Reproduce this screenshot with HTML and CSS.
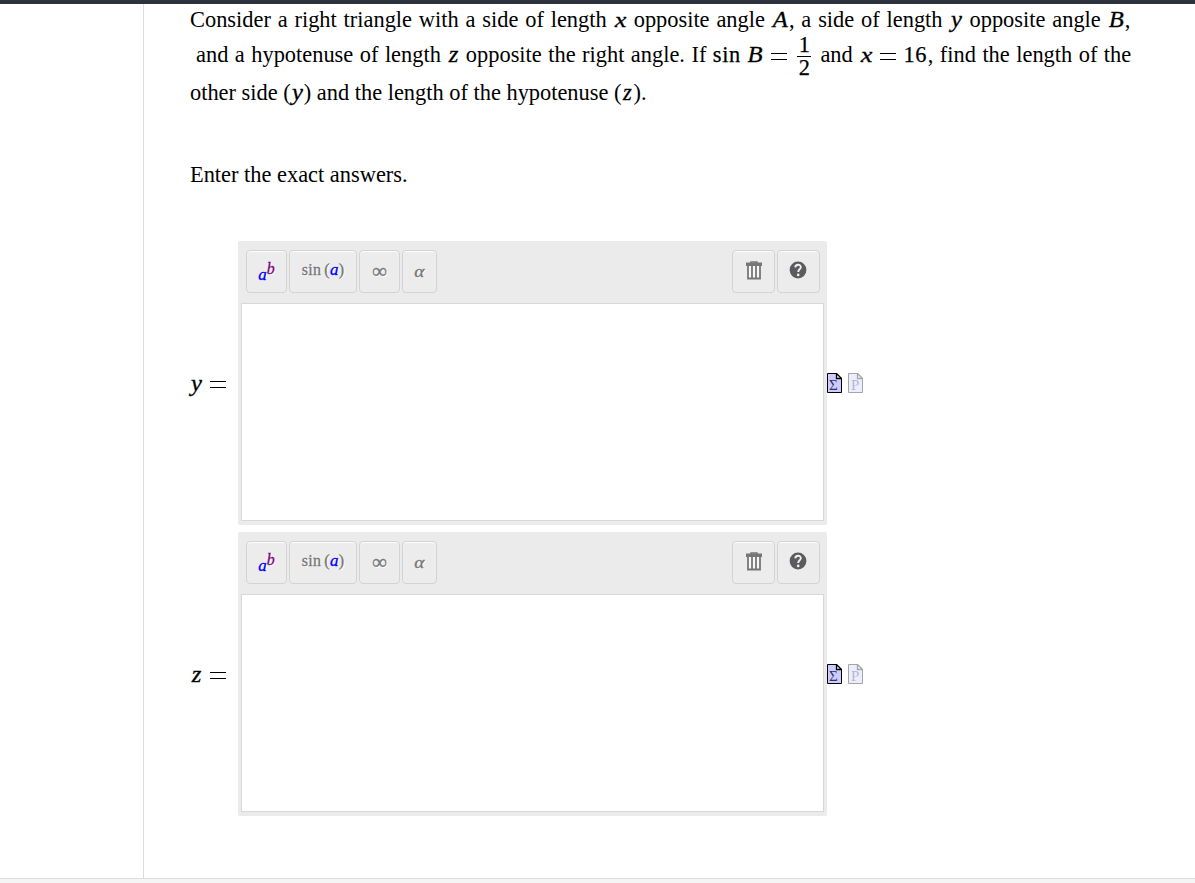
FILE: index.html
```
<!doctype html>
<html>
<head>
<meta charset="utf-8">
<title>Right triangle</title>
<link rel="stylesheet" href="styles.css">
</head>
<body>
<svg class="defs">
	<symbol id="trash" viewBox="0 0 16 19">
		<path d="M5 2V1h6v1" fill="none" stroke="#777" stroke-width="1.4"/>
		<path d="M0 1.5h16v3.5H0z" fill="#777"/>
		<path d="M2 5v12.5h12V5M6 5v12.5M10 5v12.5" fill="#f8f8f8" stroke="#777" stroke-width="1.8"/>
	</symbol>
	<symbol id="help" viewBox="0 0 18 18">
		<circle cx="9" cy="9" r="8.4" fill="#5c5c5f"/>
		<path d="M6.3 6.4C6.4 2.8 12 3 11.8 6.2C11.7 8.3 9.2 8.2 9.2 11" fill="none" stroke="#f2f2f2" stroke-width="1.9"/>
		<circle cx="9.2" cy="13.9" r="1.3" fill="#f2f2f2"/>
	</symbol>
	<symbol id="page" viewBox="0 0 15 20">
		<path d="M.5.5h9l5 5v14H.5z" fill="#ccccff" stroke="#000"/>
		<path d="M9.5.5v5h5z" fill="#eef" stroke="#000" stroke-width="1.3"/>
	</symbol>
</svg>
<div class="top"></div>
<div class="main">
	<div class="side"></div>
	<div class="content">
		<div class="line l1"><span>Consider a right triangle with a side of length</span><i class="x">x</i><span>opposite angle</span><i class="cap">A</i><span>, a side of length</span><i class="y">y</i><span>opposite angle</span><i class="cap">B</i><span>,</span></div>
		<div class="line l2"><span>and a hypotenuse of length</span><i class="z">z</i><span>opposite the right angle. If</span><b class="sin">sin</b><i class="capb">B</i><span class="eq"></span><span class="frac"><b>1</b><b>2</b></span><span>and</span><i class="x">x</i><span class="eq eqx"></span><b class="num">16</b><span class="find">, find the length of the</span></div>
		<div class="line l3"><span>other side (</span><i class="yp">y</i><span>) and the length of the hypotenuse (</span><i class="zp">z</i><span>).</span></div>
		<div class="line l4">Enter the exact answers.</div>

		<div class="row">
			<div class="label"><i>y</i><span class="eq"></span></div>
			<div class="editor">
				<div class="bar">
					<div class="btn b1"><i class="blue">a</i><i class="pow">b</i></div>
					<div class="btn b2">sin<span class="par">(</span><i class="blue">a</i><span>)</span></div>
					<div class="btn b3"><span class="inf">∞</span></div>
					<div class="btn b4"><i>α</i></div>
					<div class="btn b5"><svg width="16" height="19"><use href="#trash"/></svg></div>
					<div class="btn b6"><svg width="18" height="18"><use href="#help"/></svg></div>
				</div>
				<div class="area"></div>
			</div>
			<div class="icons">
				<svg width="15" height="20"><use href="#page"/><text x="2" y="17">Σ</text></svg>
				<svg class="off" width="15" height="20"><use href="#page"/><text x="3" y="17">P</text></svg>
			</div>
		</div>

		<div class="row">
			<div class="label"><i>z</i><span class="eq"></span></div>
			<div class="editor">
				<div class="bar">
					<div class="btn b1"><i class="blue">a</i><i class="pow">b</i></div>
					<div class="btn b2">sin<span class="par">(</span><i class="blue">a</i><span>)</span></div>
					<div class="btn b3"><span class="inf">∞</span></div>
					<div class="btn b4"><i>α</i></div>
					<div class="btn b5"><svg width="16" height="19"><use href="#trash"/></svg></div>
					<div class="btn b6"><svg width="18" height="18"><use href="#help"/></svg></div>
				</div>
				<div class="area"></div>
			</div>
			<div class="icons">
				<svg width="15" height="20"><use href="#page"/><text x="2" y="17">Σ</text></svg>
				<svg class="off" width="15" height="20"><use href="#page"/><text x="3" y="17">P</text></svg>
			</div>
		</div>
	</div>
</div>
<div class="foot"></div>
</body>
</html>
```
FILE: styles.css
```
* {padding:0;margin:0;box-sizing:border-box;}
body{height:883px;
	overflow:hidden;
	background:#fff;
	color:#000;
	font-family:"Liberation Serif",serif;
	font-size:22.4px;
}
.defs{display:none;}
.top{height:4px;
	background:#2e323e;
}
.main{display:flex;
	height:874px;
}
.side{width:144px;
	border-right:1px solid #dcdcdc;
}
.content{flex:1;
	padding-left:46px;
}
.foot{height:5px;
	border-top:1px solid #dedede;
	background:#f5f5f5;
}
.line{display:flex;
	align-items:center;
	white-space:pre;
	height:32px;
}
.line i,.line b{display:block;
	flex:none;
	text-align:center;
}
.line b{font-weight:normal;
	-webkit-text-stroke:.25px #000;
}
.line i,.label i{-webkit-text-stroke:.3px #000;}
.l1{word-spacing:1.25px;}
.l2{height:38px;
	padding-left:6px;
	word-spacing:.9px;
}
.l3{height:38px;}
.l4{margin-top:43px;
	height:40px;
}
.line .x{width:27px;
	font-size:21px;
	transform:scaleX(1.25);
}
.y{width:27px;}
.line .y,.line .yp,.label i{transform:scaleX(1.1);}
.line .z{width:25px;
	transform:scaleX(1.1);
}
.cap{width:24px;
	padding-left:6px;
}
.line .cap,.line .capb{transform:scaleX(1.1);}
.sin{width:41px;
	letter-spacing:.7px;
}
.capb{width:16px;}
.yp{width:13px;}
.zp{width:12px;}
.line .num{width:25px;
	letter-spacing:.5px;
}
.eq{flex:none;
	width:16px;
	height:7px;
	margin:2px 8px 0;
	border-top:1.4px solid #000;
	border-bottom:1.4px solid #000;
}
.line .eqx{margin:2px 7px 0 0;}
.frac{width:14px;
	margin:3px 9px 0 2px;
}
.frac b{line-height:22px;}
.frac b:first-child{border-bottom:1px solid #000;}
.row{display:flex;
	align-items:center;
	height:284px;
	margin-bottom:7px;
}
.l4 + .row{margin-top:46px;}
.label{display:flex;
	align-items:center;
	width:48px;
	padding-top:2px;
}
.label i{width:13px;
	text-align:center;
}
.label .eq{margin:0 0 0 7px;}
.editor{width:589px;
	height:284px;
	padding:9px 3px 3px;
	border-radius:2px;
	background:#ebebeb;
}
.bar{display:flex;
	gap:2px;
	height:53px;
	padding:0 4px 0 5px;
}
.btn{display:flex;
	align-items:center;
	justify-content:center;
	height:43px;
	padding-bottom:3px;
	border:1px solid #d3d3d3;
	border-radius:4px;
	background:#ececec;
	box-shadow:inset 0 1px 1px #fff;
	color:#777;
	font-size:16px;
	text-shadow:1px 1px 0 #fff;
}
.btn i,.btn span,.b2{-webkit-text-stroke:.3px;}
.b1{width:41px;}
.b2{width:68px;
	letter-spacing:.3px;
}
.b3{width:41px;}
.b4{width:35px;}
.b5{width:43px;
	margin-left:auto;
}
.b6{width:43px;
	padding-right:2px;
}
.b3,.b4{padding-bottom:0;}
.b4 i{transform:scaleX(1.2);}
.inf{font-size:21px;}
.blue{color:#00f;
	font-size:17px;
}
.b1 .blue{margin-top:9px;}
.pow{margin-top:-3px;
	color:#800080;
}
.par{margin-left:3px;}
.area{height:218px;
	border:1px solid #d8d8d8;
	background:#fff;
}
.icons{display:flex;
	gap:6px;
}
.icons text{font-size:15px;
	fill:#336;
}
.off{opacity:.35;}
```
